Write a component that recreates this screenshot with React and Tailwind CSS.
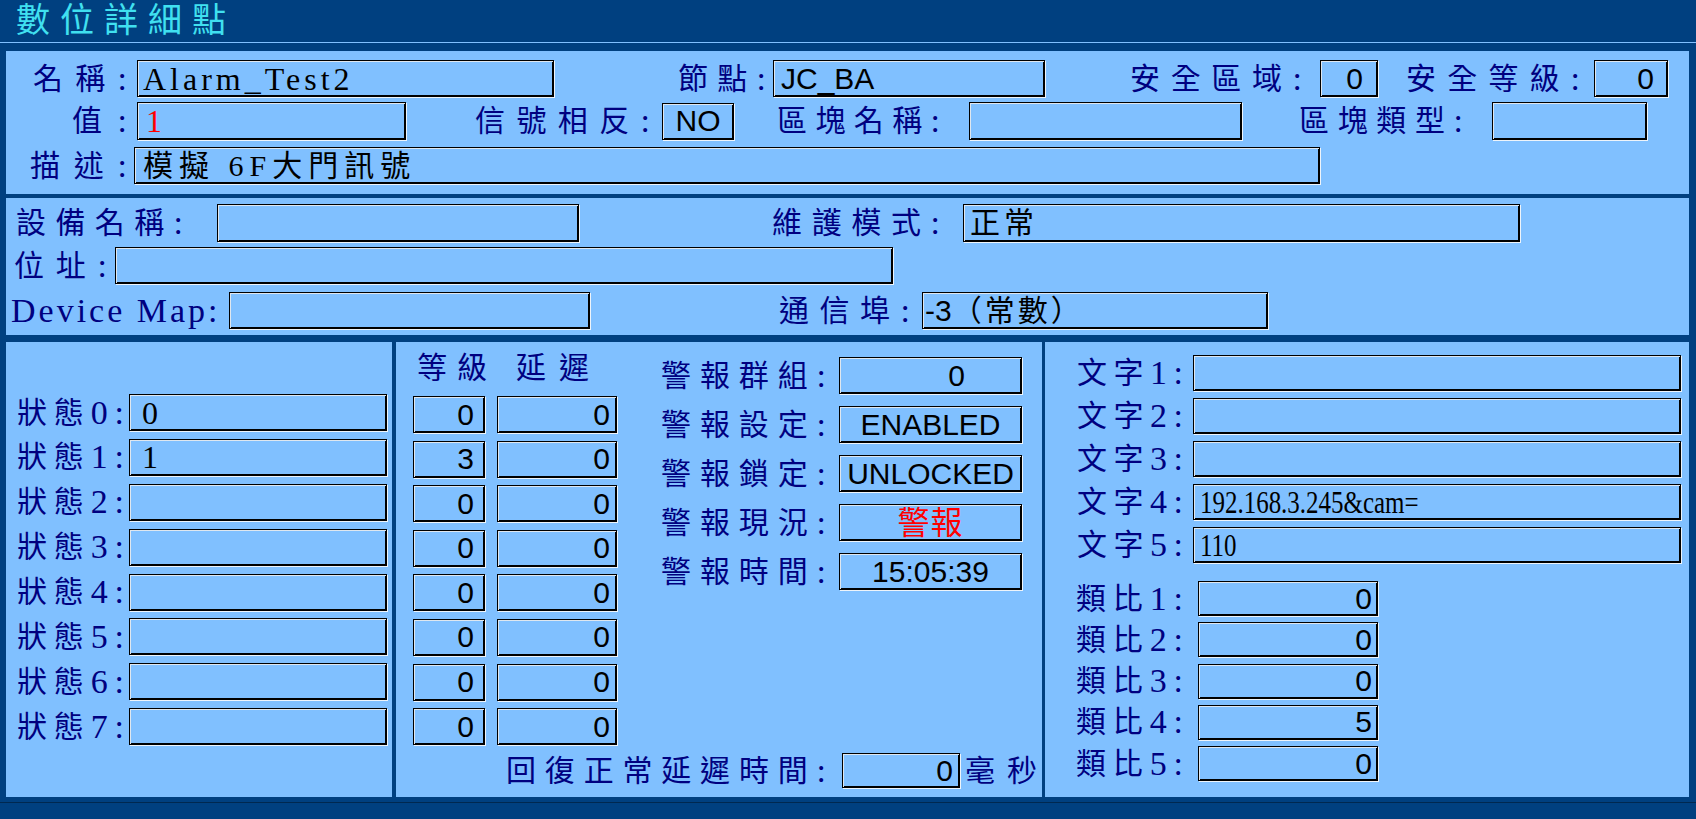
import React from "react";

// shared text styles
const SANS = "[font-family:'Liberation_Sans',sans-serif] text-[30px] leading-none text-black";
const SERIF = "text-[32px] leading-none tracking-[4px] text-black";
const NARROW = "inline-block origin-left scale-x-[0.78] text-[32px] leading-none text-black";

// label whose characters are spread over a fixed width
function Lbl({ t, className = "" }) {
  return (
    <div className={`flex shrink-0 items-center justify-between text-[30px] leading-none text-[#000080] ${className}`}>
      {Array.from(t).map((c, i) => (
        <span key={i} className={/[0-9:]/.test(c) ? "text-[34px]" : ""}>
          {c}
        </span>
      ))}
    </div>
  );
}

function Box({ className = "", children }) {
  return (
    <div
      className={`flex shrink-0 items-center overflow-hidden whitespace-nowrap border border-black bg-[#80c0ff] shadow-[inset_1px_1px_0_#dfe7ef,inset_-1px_-1px_0_#000,1px_1px_0_#eef4fa] ${className}`}
    >
      {children}
    </div>
  );
}

const grades = [
  ["0", "0"],
  ["3", "0"],
  ["0", "0"],
  ["0", "0"],
  ["0", "0"],
  ["0", "0"],
  ["0", "0"],
  ["0", "0"],
];

const states = ["0", "1", "", "", "", "", "", ""];

const alarms = [
  { label: "警報群組:", value: "0", kind: "group" },
  { label: "警報設定:", value: "ENABLED" },
  { label: "警報鎖定:", value: "UNLOCKED" },
  { label: "警報現況:", value: "警報", kind: "red" },
  { label: "警報時間:", value: "15:05:39" },
];

const texts = ["", "", "", "192.168.3.245&cam=", "110"];
const analogs = ["0", "0", "0", "5", "0"];

export default function App() {
  return (
    <div className="w-[1696px] h-[819px] overflow-hidden bg-[#004080] [font-family:'Liberation_Serif','Noto_Sans_CJK_TC',serif]">
      {/* title bar */}
      <div className="flex h-[42px] items-center">
        <Lbl t="數位詳細點" className="ml-[16px] w-[210px] !text-[34px] !text-[#40e0f0]" />
      </div>
      <div className="h-px bg-[#80c0ff]" />

      {/* panel 1 */}
      <div className="ml-[6px] mr-[7px] mt-[8px] h-[143px] bg-[#80c0ff] pt-[9px]">
        <div className="flex h-[37px] items-center">
          <Lbl t="名稱:" className="ml-[27px] w-[94px]" />
          <Box className="ml-[10px] h-[37px] w-[417px] pl-[5px]">
            <span className={SERIF}>Alarm_Test2</span>
          </Box>
          <Lbl t="節點:" className="ml-[124px] w-[88px]" />
          <Box className="ml-[7px] h-[37px] w-[272px] pl-[7px]">
            <span className={SANS}>JC_BA</span>
          </Box>
          <Lbl t="安全區域:" className="ml-[85px] w-[172px]" />
          <Box className="ml-[18px] h-[37px] w-[58px] justify-end pr-[14px]">
            <span className={SANS}>0</span>
          </Box>
          <Lbl t="安全等級:" className="ml-[28px] w-[174px]" />
          <Box className="ml-[14px] h-[37px] w-[74px] justify-end pr-[13px]">
            <span className={SANS}>0</span>
          </Box>
        </div>

        <div className="mt-[5px] flex h-[38px] items-center">
          <Lbl t="值:" className="ml-[66px] w-[55px]" />
          <Box className="ml-[10px] h-[38px] w-[269px] pl-[8px]">
            <span className={`${SERIF} !text-[#ff0000]`}>1</span>
          </Box>
          <Lbl t="信號相反:" className="ml-[69px] w-[175px]" />
          <Box className="ml-[12px] h-[37px] w-[72px] justify-center">
            <span className={SANS}>NO</span>
          </Box>
          <Lbl t="區塊名稱:" className="ml-[43px] w-[163px]" />
          <Box className="ml-[29px] h-[38px] w-[273px]" />
          <Lbl t="區塊類型:" className="ml-[57px] w-[164px]" />
          <Box className="ml-[29px] h-[38px] w-[155px]" />
        </div>

        <div className="mt-[7px] flex h-[37px] items-center">
          <Lbl t="描述:" className="ml-[24px] w-[97px]" />
          <Box className="ml-[7px] h-[37px] w-[1186px] pl-[8px]">
            <span className="text-[30px] leading-none tracking-[6px] text-black">模擬 6F大門訊號</span>
          </Box>
        </div>
      </div>

      {/* panel 2 */}
      <div className="ml-[6px] mr-[7px] mt-[4px] h-[137px] bg-[#80c0ff] pt-[6px]">
        <div className="flex h-[38px] items-center">
          <Lbl t="設備名稱:" className="ml-[10px] w-[167px]" />
          <Box className="ml-[34px] h-[38px] w-[362px]" />
          <Lbl t="維護模式:" className="ml-[193px] w-[168px]" />
          <Box className="ml-[23px] h-[38px] w-[557px] pl-[6px]">
            <span className="text-[30px] leading-none tracking-[4px] text-black">正常</span>
          </Box>
        </div>
        <div className="mt-[5px] flex h-[37px] items-center">
          <Lbl t="位址:" className="ml-[8px] w-[93px]" />
          <Box className="ml-[8px] h-[37px] w-[778px]" />
        </div>
        <div className="mt-[8px] flex h-[37px] items-center">
          <span className="ml-[5px] w-[210px] shrink-0 whitespace-nowrap text-[34px] leading-none tracking-[3px] text-[#000080]">
            Device Map:
          </span>
          <Box className="ml-[8px] h-[37px] w-[361px]" />
          <Lbl t="通信埠:" className="ml-[189px] w-[131px]" />
          <Box className="ml-[12px] h-[37px] w-[346px] pl-[2px]">
            <span className={SANS}>-3</span>
            <span className="text-[30px] leading-none tracking-[3px] text-black">（常數）</span>
          </Box>
        </div>
      </div>

      {/* panel 3 */}
      <div className="ml-[6px] mr-[7px] mt-[7px] flex h-[455px]">
        {/* states */}
        <div className="flex w-[386px] shrink-0 flex-col gap-[7.9px] bg-[#80c0ff] pt-[52px]">
          {states.map((v, i) => (
            <div key={i} className="flex h-[37px] items-center">
              <Lbl t={`狀態${i}:`} className="ml-[11px] w-[107px]" />
              <Box className="ml-[5px] h-[37px] w-[258px] pl-[12px]">
                <span className={SERIF}>{v}</span>
              </Box>
            </div>
          ))}
        </div>

        {/* grades, delays and alarm */}
        <div className="ml-[4px] flex w-[646px] shrink-0 flex-col bg-[#80c0ff]">
          <div className="flex">
            <div className="flex flex-col">
              <div className="mt-[11px] flex h-[30px] items-center">
                <Lbl t="等級" className="ml-[21px] w-[70px]" />
                <Lbl t="延遲" className="ml-[29px] w-[73px]" />
              </div>
              <div className="mt-[13px] flex flex-col gap-[7.6px]">
                {grades.map(([g, d], i) => (
                  <div key={i} className="flex h-[37px] items-center">
                    <Box className="ml-[17px] h-[37px] w-[72px] justify-end pr-[10px]">
                      <span className={SANS}>{g}</span>
                    </Box>
                    <Box className="ml-[12px] h-[37px] w-[120px] justify-end pr-[6px]">
                      <span className={SANS}>{d}</span>
                    </Box>
                  </div>
                ))}
              </div>
            </div>

            <div className="ml-[44px] flex flex-col gap-[12px] pt-[15px]">
              {alarms.map((a) => (
                <div key={a.label} className="flex h-[37px] items-center">
                  <Lbl t={a.label} className="w-[165px]" />
                  <Box
                    className={`ml-[13px] h-[37px] w-[183px] ${
                      a.kind === "group" ? "justify-end pr-[56px]" : "justify-center"
                    }`}
                  >
                    {a.kind === "red" ? (
                      <span className="text-[32px] leading-none tracking-[1px] text-[#ff0000]">{a.value}</span>
                    ) : (
                      <span className={SANS}>{a.value}</span>
                    )}
                  </Box>
                </div>
              ))}
            </div>
          </div>

          <div className="mt-[8px] flex h-[35px] items-center">
            <Lbl t="回復正常延遲時間:" className="ml-[110px] w-[320px]" />
            <Box className="ml-[16px] h-[35px] w-[118px] justify-end pr-[6px]">
              <span className={SANS}>0</span>
            </Box>
            <Lbl t="毫秒" className="ml-[5px] w-[72px]" />
          </div>
        </div>

        {/* texts and analogs */}
        <div className="ml-[3px] flex w-[644px] shrink-0 flex-col bg-[#80c0ff] pt-[13px]">
          <div className="flex flex-col gap-[7px]">
            {texts.map((v, i) => (
              <div key={i} className="flex h-[36px] items-center">
                <Lbl t={`文字${i + 1}:`} className="ml-[32px] w-[106px]" />
                <Box className="ml-[10px] h-[36px] w-[488px] pl-[6px]">
                  <span className={NARROW}>{v}</span>
                </Box>
              </div>
            ))}
          </div>
          <div className="mt-[18px] flex flex-col gap-[6.25px]">
            {analogs.map((v, i) => (
              <div key={i} className="flex h-[35px] items-center">
                <Lbl t={`類比${i + 1}:`} className="ml-[31px] w-[107px]" />
                <Box className="ml-[15px] h-[35px] w-[180px] justify-end pr-[5px]">
                  <span className={SANS}>{v}</span>
                </Box>
              </div>
            ))}
          </div>
        </div>
      </div>

      <div className="mt-[5px] h-px bg-[#002850]" />
    </div>
  );
}
